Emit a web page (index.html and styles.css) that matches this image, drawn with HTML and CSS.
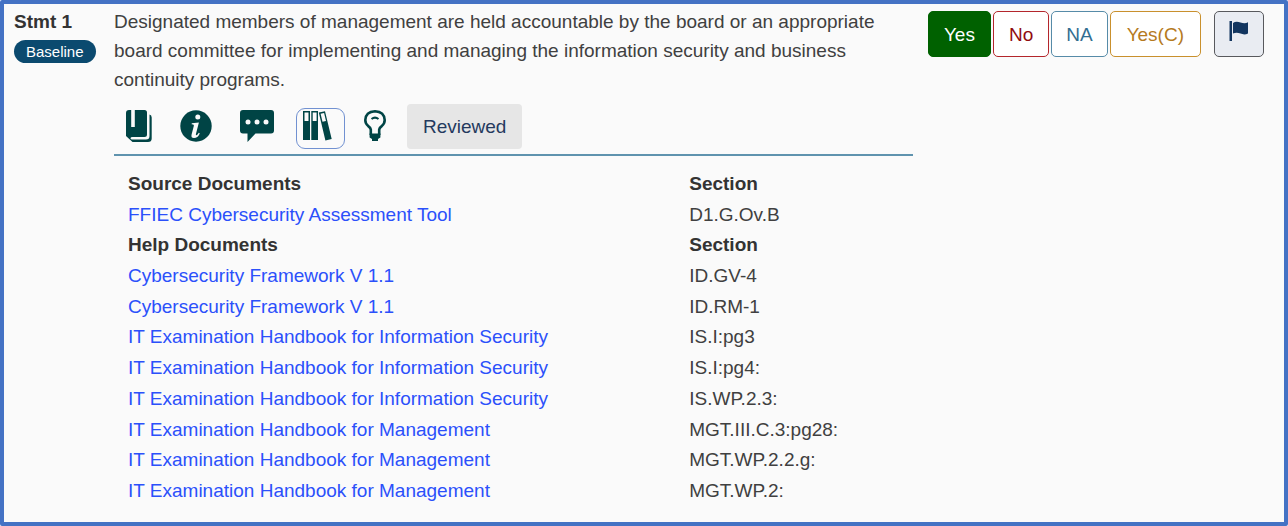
FILE: index.html
```html
<!DOCTYPE html>
<html lang="en">
<head>
<meta charset="utf-8">
<title>Stmt 1</title>
<link rel="stylesheet" href="styles.css">
</head>
<body>
<main class="statement">
  <div class="label">
    <strong class="label-title">Stmt 1</strong>
    <span class="badge">Baseline</span>
  </div>

  <section class="content">
    <p class="question">Designated members of management are held accountable by the board or an appropriate board committee for implementing and managing the information security and business continuity programs.</p>
    <div class="toolbar">
      <button class="tool" type="button" aria-label="Guidance">
        <svg width="26" height="32" viewBox="0 0 26 32"><path fill="currentColor" d="M3 0H5.200V17H8.800V0H18.500Q21 0 21 2.500V24.500Q21 27 18.500 27H6.500Q4.500 27 4.500 28.300T6.500 29.500H20Q23.500 29.500 23.500 26V4.500Q25.700 5 25.700 7.500V28.500Q25.700 32 22 32H6.500L0 26V3Q0 0 3 0Z"/></svg>
      </button>
      <button class="tool" type="button" aria-label="Supplemental information">
        <svg width="32" height="32" viewBox="0 0 32 32"><circle cx="16" cy="16" r="15.700" fill="currentColor"/><circle cx="17.800" cy="7" r="2.500" fill="#fafafa"/><path fill="#fafafa" d="M11.800 13.300L18.900 12.500L16 23.700Q15.500 25.500 16.400 25.300Q17.500 25 18.800 22.800L19.800 23.400Q17.600 28 14 28Q10.700 28 11.600 24.500L13.800 16Q14.200 14.500 13.100 14.400L11.600 14.300Z"/></svg>
      </button>
      <button class="tool" type="button" aria-label="Comments">
        <svg width="34" height="32" viewBox="0 0 34 32"><path fill="currentColor" d="M3 0H31Q34 0 34 3V20.500Q34 23.500 31 23.500H15.500L7.500 32V23.500H3Q0 23.500 0 20.500V3Q0 0 3 0Z"/><g fill="#fafafa"><circle cx="8" cy="12" r="2.500"/><circle cx="17" cy="12" r="2.500"/><circle cx="26" cy="12" r="2.500"/></g></svg>
      </button>
      <button class="tool tool-active" type="button" aria-label="References" aria-pressed="true">
        <svg width="30" height="30" viewBox="0 0 30 30"><g fill="currentColor"><path fill-rule="evenodd" d="M0 0H7V29H0ZM1.500 1.500V10H5.500V1.500Z"/><path fill-rule="evenodd" d="M8.300 0H15V29H8.300ZM9.700 1.500V10H13.600V1.500Z"/><path fill-rule="evenodd" d="M15.800 1.600L22 .2L28.700 28L22.400 29.500ZM17.600 2.700L19.500 10.700L23 9.900L21.100 1.900Z"/></g></svg>
      </button>
      <button class="tool" type="button" aria-label="Observations">
        <svg width="22" height="32" viewBox="0 0 22 32"><path fill="none" stroke="currentColor" stroke-width="2.600" d="M6.800 25V19.500Q6.500 17.500 4 15.800Q1.300 13.500 1.300 10Q1.700 1.800 11 1.300Q20.300 1.800 20.700 10Q20.700 13.500 18 15.800Q15.500 17.500 15.200 19.500V25"/><path fill="none" stroke="currentColor" stroke-width="2" d="M7.500 9Q11 6.200 14.500 9"/><path fill="currentColor" d="M5.600 23.500H16.400V27.500L14 29V31H8V29L5.600 27.500Z"/></svg>
      </button>
      <button class="reviewed" type="button">Reviewed</button>
    </div>

    <table class="documents">
      <tbody>
        <tr><th scope="col">Source Documents</th><th scope="col">Section</th></tr>
        <tr><td><a href="#">FFIEC Cybersecurity Assessment Tool</a></td><td>D1.G.Ov.B</td></tr>
        <tr><th scope="col">Help Documents</th><th scope="col">Section</th></tr>
        <tr><td><a href="#">Cybersecurity Framework V 1.1</a></td><td>ID.GV-4</td></tr>
        <tr><td><a href="#">Cybersecurity Framework V 1.1</a></td><td>ID.RM-1</td></tr>
        <tr><td><a href="#">IT Examination Handbook for Information Security</a></td><td>IS.I:pg3</td></tr>
        <tr><td><a href="#">IT Examination Handbook for Information Security</a></td><td>IS.I:pg4:</td></tr>
        <tr><td><a href="#">IT Examination Handbook for Information Security</a></td><td>IS.WP.2.3:</td></tr>
        <tr><td><a href="#">IT Examination Handbook for Management</a></td><td>MGT.III.C.3:pg28:</td></tr>
        <tr><td><a href="#">IT Examination Handbook for Management</a></td><td>MGT.WP.2.2.g:</td></tr>
        <tr><td><a href="#">IT Examination Handbook for Management</a></td><td>MGT.WP.2:</td></tr>
      </tbody>
    </table>
  </section>

  <div class="answers">
    <button class="answer answer-yes" type="button" aria-pressed="true">Yes</button>
    <button class="answer answer-no" type="button">No</button>
    <button class="answer answer-na" type="button">NA</button>
    <button class="answer answer-alt" type="button">Yes(C)</button>
    <button class="answer answer-flag" type="button" aria-label="Mark for review">
      <svg width="20" height="20" viewBox="0 0 20 20"><path fill="currentColor" d="M.5 0H3V20H.5ZM4 2Q7-.2 11.500 1.500T19 1.200V12.500Q15.500 14.200 11.500 12.600T4 12.600Z"/></svg>
    </button>
  </div>
</main>
</body>
</html>
```
FILE: styles.css
```css
* {
  box-sizing: border-box;
}

body {
  margin: 0;
  background: #fff;
  color: #404040;
  font: 19px/29px "Liberation Sans", Arial, sans-serif;
}

button {
  margin: 0;
  font: inherit;
  cursor: pointer;
}

svg {
  display: block;
}

.statement {
  display: grid;
  grid-template-columns: 100px minmax(0, 1fr) auto;
  align-items: start;
  min-height: 100vh;
  padding: 3px 20px 12px 10px;
  border: 4px solid #4472c4;
  border-radius: 2px;
  background: #fafafa;
}

.label {
  display: flex;
  flex-direction: column;
  align-items: flex-start;
  gap: 4px;
}

.label-title {
  color: #333;
}

.badge {
  padding: 0 12px;
  border-radius: 12px;
  background: #0b4a6f;
  color: #fff;
  font-size: 15px;
  line-height: 23px;
}

.content {
  padding-right: 15px;
}

.question {
  margin: 0;
}

.toolbar {
  display: flex;
  align-items: center;
  gap: 4px;
  padding: 10px 0 5px;
  border-bottom: 2px solid #5f93ae;
}

.tool {
  padding: 0 12px 2px;
  border: 0;
  background: none;
  color: #004445;
}

.tool-active {
  align-self: flex-end;
  margin: 0 3px 0 6px;
  padding: 2px 11px 7px 6px;
  border: 1px solid #7191d1;
  border-radius: 9px;
}

.reviewed {
  margin-left: 5px;
  padding: 8px 16px;
  border: 0;
  border-radius: 4px;
  background: #e6e6e6;
  color: #243a5e;
}

.documents {
  width: 100%;
  height: 338px;
  margin-top: 12px;
  border-collapse: collapse;
  table-layout: fixed;
}

.documents th,
.documents td {
  padding: 0;
  text-align: left;
}

.documents th {
  color: #333;
}

.documents th:first-child,
.documents td:first-child {
  width: 72%;
  padding-left: 14px;
}

.documents a {
  color: #2b50fa;
  text-decoration: none;
}

.answers {
  display: flex;
  gap: 2px;
  padding-top: 4px;
}

.answer {
  height: 46px;
  padding: 0 15px;
  border: 1px solid;
  border-radius: 5px;
  background: #fff;
}

.answer-yes {
  border-color: #006100;
  background: #006100;
  color: #fff;
}

.answer-no {
  border-color: #b4262c;
  color: #900b10;
}

.answer-na {
  padding: 0 14px;
  border-color: #568ba8;
  color: #326e91;
}

.answer-alt {
  padding: 0 16px;
  border-color: #c9902d;
  color: #b57a1e;
}

.answer-flag {
  margin-left: 11px;
  padding: 0 14px 6px;
  border-color: #58595d;
  background: #e9ecf2;
  color: #12355f;
}
```
